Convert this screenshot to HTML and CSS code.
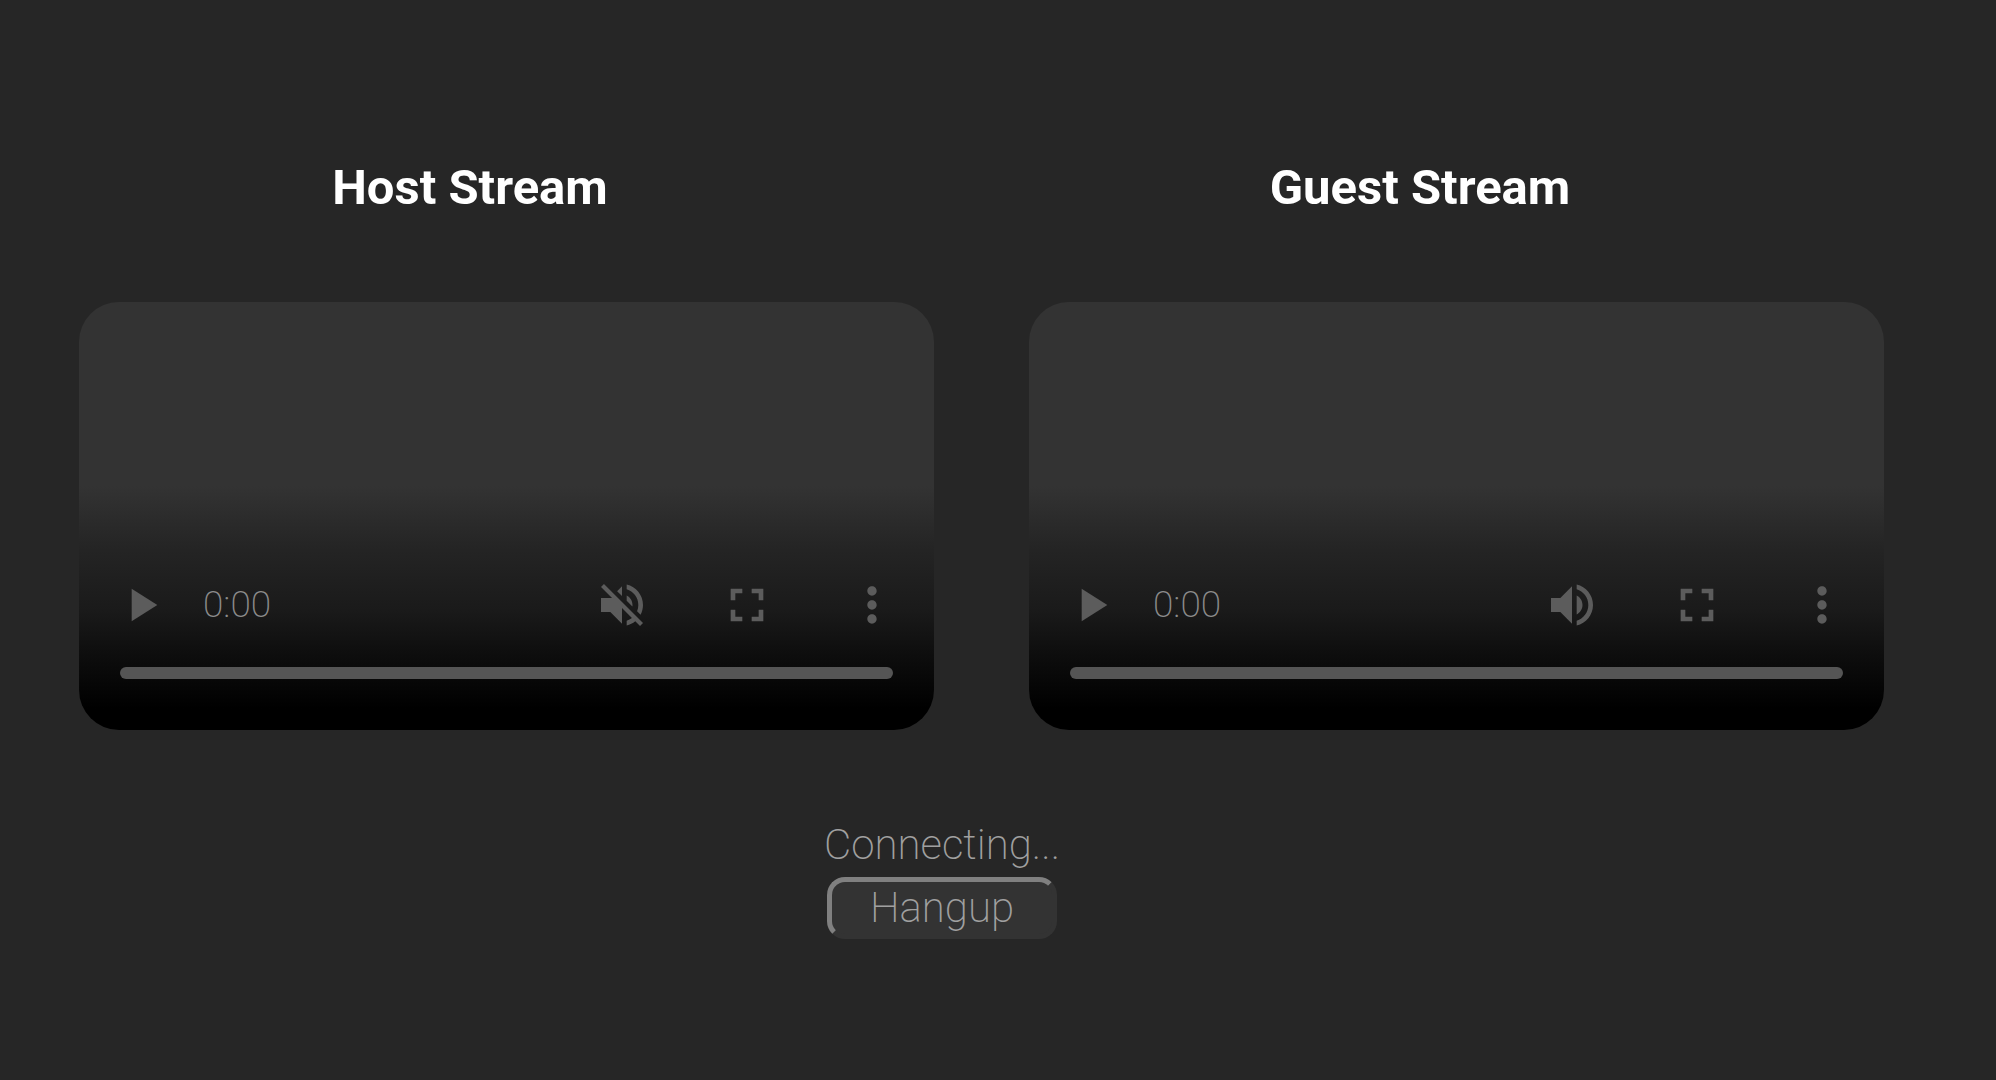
FILE: index.html
```html
<!DOCTYPE html>
<html lang="en">
<head>
  <meta charset="utf-8">
  <title>Stream Call</title>
  <link rel="stylesheet" href="styles.css">
</head>
<body>
  <main class="call">
    <div class="streams">
      <section class="stream">
        <h2 class="stream-title">Host Stream</h2>
        <div class="player">
          <div class="controls">
            <button class="icon-button" type="button" aria-label="Play">
              <svg class="icon" viewBox="0 0 24 24"><path d="M8 5v14l11-7z"/></svg>
            </button>
            <span class="time">0:00</span>
            <div class="actions">
              <button class="icon-button" type="button" aria-label="Unmute">
                <svg class="icon" viewBox="0 0 24 24"><path d="M16.5 12c0-1.77-1.02-3.29-2.5-4.03v2.21l2.45 2.45c.03-.2.05-.41.05-.63zm2.5 0c0 .94-.2 1.82-.54 2.64l1.51 1.51C20.63 14.91 21 13.5 21 12c0-4.28-2.99-7.86-7-8.77v2.06c2.89.86 5 3.54 5 6.71zM4.27 3L3 4.27 7.73 9H3v6h4l5 5v-6.73l4.25 4.25c-.67.52-1.42.93-2.25 1.18v2.06c1.38-.31 2.63-.95 3.69-1.81L19.73 21 21 19.73l-9-9L4.27 3zM12 4L9.91 6.09 12 8.18V4z"/></svg>
              </button>
              <button class="icon-button" type="button" aria-label="Full screen">
                <svg class="icon" viewBox="0 0 24 24"><path d="M7 14H5v5h5v-2H7v-3zm-2-4h2V7h3V5H5v5zm12 7h-3v2h5v-5h-2v3zM14 5v2h3v3h2V5h-5z"/></svg>
              </button>
              <button class="icon-button" type="button" aria-label="More options">
                <svg class="icon" viewBox="0 0 24 24"><path d="M12 8c1.1 0 2-.9 2-2s-.9-2-2-2-2 .9-2 2 .9 2 2 2zm0 2c-1.1 0-2 .9-2 2s.9 2 2 2 2-.9 2-2-.9-2-2-2zm0 6c-1.1 0-2 .9-2 2s.9 2 2 2 2-.9 2-2-.9-2-2-2z"/></svg>
              </button>
            </div>
          </div>
          <input class="timeline" type="range" min="0" max="100" value="0" aria-label="Host stream position">
        </div>
      </section>
      <section class="stream">
        <h2 class="stream-title">Guest Stream</h2>
        <div class="player">
          <div class="controls">
            <button class="icon-button" type="button" aria-label="Play">
              <svg class="icon" viewBox="0 0 24 24"><path d="M8 5v14l11-7z"/></svg>
            </button>
            <span class="time">0:00</span>
            <div class="actions">
              <button class="icon-button" type="button" aria-label="Mute">
                <svg class="icon" viewBox="0 0 24 24"><path d="M3 9v6h4l5 5V4L7 9H3zm13.5 3c0-1.77-1.02-3.29-2.5-4.03v8.05c1.48-.73 2.5-2.25 2.5-4.02zM14 3.23v2.06c2.89.86 5 3.54 5 6.71s-2.11 5.85-5 6.71v2.06c4.01-.91 7-4.49 7-8.77s-2.99-7.86-7-8.77z"/></svg>
              </button>
              <button class="icon-button" type="button" aria-label="Full screen">
                <svg class="icon" viewBox="0 0 24 24"><path d="M7 14H5v5h5v-2H7v-3zm-2-4h2V7h3V5H5v5zm12 7h-3v2h5v-5h-2v3zM14 5v2h3v3h2V5h-5z"/></svg>
              </button>
              <button class="icon-button" type="button" aria-label="More options">
                <svg class="icon" viewBox="0 0 24 24"><path d="M12 8c1.1 0 2-.9 2-2s-.9-2-2-2-2 .9-2 2 .9 2 2 2zm0 2c-1.1 0-2 .9-2 2s.9 2 2 2 2-.9 2-2-.9-2-2-2zm0 6c-1.1 0-2 .9-2 2s.9 2 2 2 2-.9 2-2-.9-2-2-2z"/></svg>
              </button>
            </div>
          </div>
          <input class="timeline" type="range" min="0" max="100" value="0" aria-label="Guest stream position">
        </div>
      </section>
    </div>
    <div class="status">
      <p class="status-text">Connecting...</p>
      <button class="hangup" type="button">Hangup</button>
    </div>
  </main>
</body>
</html>
```
FILE: styles.css
```css
* {
  box-sizing: border-box;
}

body {
  margin: 0;
  min-height: 100vh;
  background: #262626;
  color: #a0a0a0;
  font-family: Roboto, "Liberation Sans", sans-serif;
  font-weight: 200;
}

.call {
  padding: 160px 112px 40px 0;
}

.streams {
  display: grid;
  grid-template-columns: 1fr 1fr;
  gap: 95px;
  padding-left: 79px;
}

.stream-title {
  margin: 0 0 86px;
  padding-right: 73px;
  color: #fff;
  font-size: 49px;
  font-weight: 700;
  line-height: 56px;
  text-align: center;
}

.player {
  display: flex;
  flex-direction: column;
  justify-content: flex-end;
  gap: 34px;
  aspect-ratio: 2 / 1;
  padding-bottom: 51px;
  border-radius: 40px;
  background: linear-gradient(#333 43%, #242424 58%, #1a1a1a 72%, #0e0e0e 82%, #000 95%);
}

.controls {
  display: flex;
  align-items: center;
  gap: 34px;
  padding: 0 34px;
}

.actions {
  display: flex;
  gap: 69px;
  margin-left: auto;
}

.icon-button {
  width: 56px;
  height: 56px;
  padding: 0;
  border: 0;
  background: none;
  color: #5c5c5c;
}

.icon {
  display: block;
  width: 56px;
  height: 56px;
  fill: currentColor;
}

.time {
  color: #8c8c8c;
  font-size: 37px;
  line-height: 56px;
}

.timeline {
  appearance: none;
  height: 12px;
  margin: 0 41px;
  border-radius: 6px;
  background: #555;
}

.timeline::-webkit-slider-thumb {
  appearance: none;
  width: 0;
  height: 12px;
}

.status {
  display: flex;
  flex-direction: column;
  align-items: center;
  gap: 6px;
  margin-top: 89px;
}

.status-text {
  margin: 0;
  font-size: 42px;
  line-height: 52px;
}

.hangup {
  min-width: 230px;
  padding: 0 36px;
  border: 5px solid;
  border-color: #808080 #333 #333 #808080;
  border-radius: 18px;
  background: #333;
  color: inherit;
  font: inherit;
  font-size: 42px;
  line-height: 52px;
}
```
